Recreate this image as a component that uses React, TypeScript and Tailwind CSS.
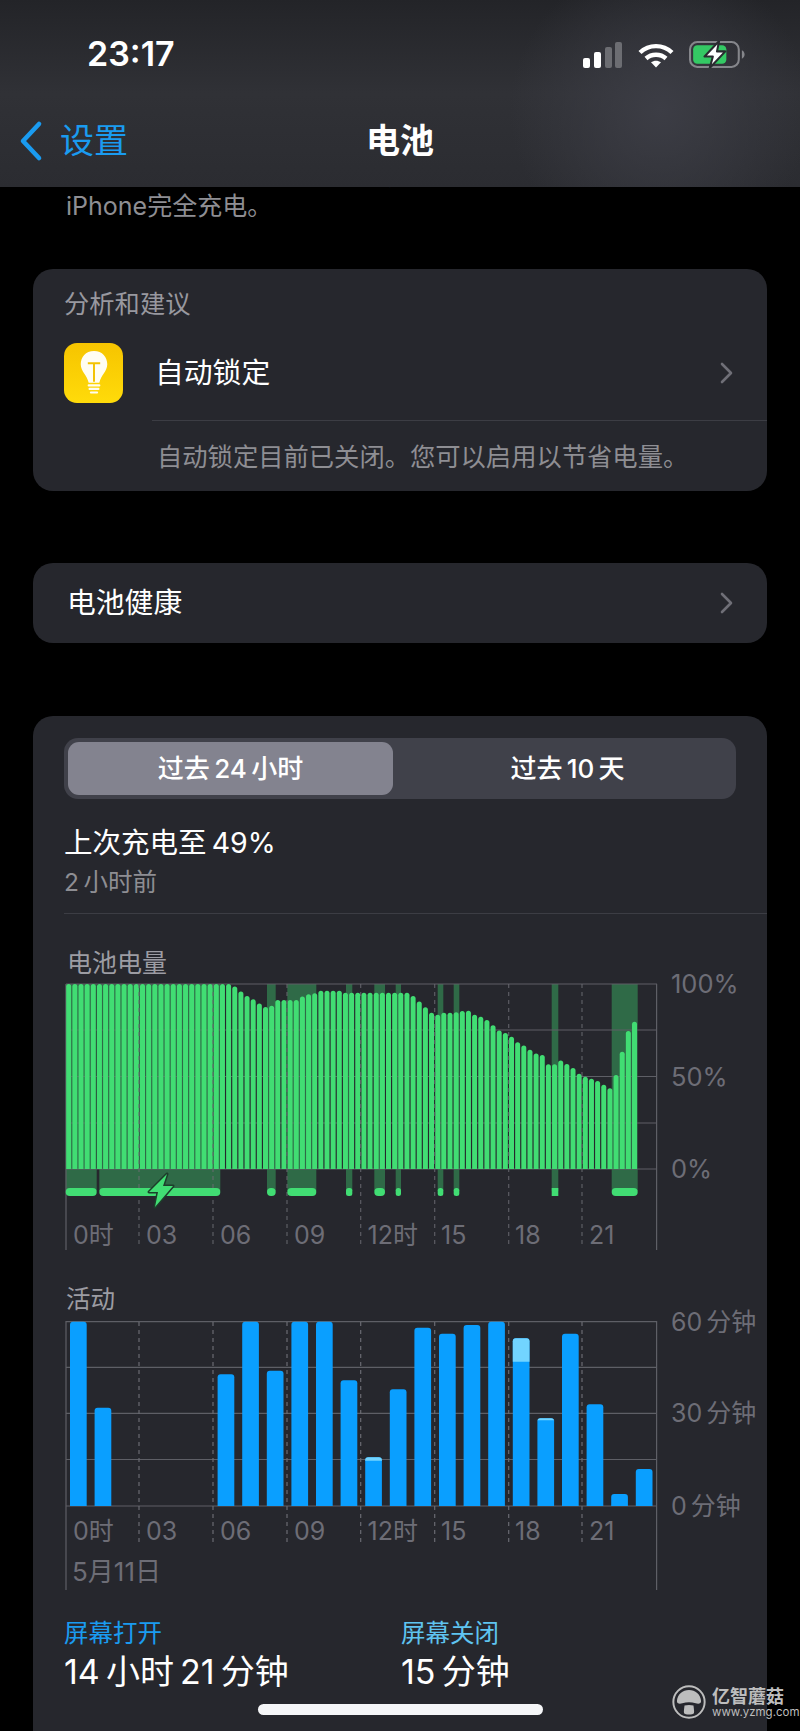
const fontStack = 'font-[Inter,"Noto_Sans_CJK_SC",sans-serif]'

// battery level for each 15 min slot, percent
const levels = [
  ...Array(27).fill(100),
  98.6, 95.9, 93.5, 91.7, 89.5, 87.6, 88.3, 91.4, 91.4, 91.4, 91.4, 93.2, 94.4, 95, 96.4, 96.4, 96.4, 96.4,
  ...Array(11).fill(95.3),
  93.5, 90.5, 87.4, 84.5, 83.4, 84.5, 84.5, 84.7, 85.4, 85.6, 83.4, 82.3, 80.5, 77.7, 74.8, 73.5, 71.5, 68.5,
  66.7, 64.5, 62.5, 61.6, 56.6, 56.6, 58.6, 56.8, 54.6, 51.5, 49.9, 48.8, 47.6, 45.6, 43.6, 50.8, 63.4, 74.6, 79.6,
]

const charging = [
  [65.7, 96.7], [99.3, 220.3], [267, 275.7], [287.3, 316.3], [346, 352.3], [374.3, 385],
  [395.7, 401], [437.7, 443.3], [453.7, 459.3], [551.7, 558.3], [611.7, 637.7],
]

// on / off screen minutes for each hour, as top y of the bar
const activity: { top: number; light?: number }[] = [
  { top: 1321.7 }, { top: 1407.7 }, { top: 0 }, { top: 0 }, { top: 0 }, { top: 0 },
  { top: 1374.3 }, { top: 1321.7 }, { top: 1370.7 }, { top: 1321.7 }, { top: 1321.7 }, { top: 1380.3 },
  { top: 1457.3, light: 3.5 }, { top: 1389.3 }, { top: 1327.7 }, { top: 1333.7 }, { top: 1325 }, { top: 1321.7 },
  { top: 1338.3, light: 23.5 }, { top: 1418.3, light: 2 }, { top: 1333.7 }, { top: 1404.3 }, { top: 1494 }, { top: 1469 },
]

const hours = [
  { x: 73, t: '0时' }, { x: 146, t: '03' }, { x: 220, t: '06' }, { x: 294, t: '09' },
  { x: 367.5, t: '12时' }, { x: 441, t: '15' }, { x: 515, t: '18' }, { x: 589, t: '21' },
]
const dashes = [139, 213, 287, 360.7, 434.7, 508.7, 582]

const topRound = (x: number, y: number, w: number, bottom: number, r: number) =>
  `M${x} ${bottom}V${y + r}Q${x} ${y} ${x + r} ${y}H${x + w - r}Q${x + w} ${y} ${x + w} ${y + r}V${bottom}Z`

function Chevron() {
  return (
    <svg width="16" height="24" viewBox="0 0 16 24" fill="none" className="shrink-0">
      <path d="M3 3l9 9-9 9" stroke="#6f6f77" strokeWidth="2.6" strokeLinecap="round" strokeLinejoin="round" />
    </svg>
  )
}

function StatusIcons() {
  return (
    <div className="flex items-end gap-[15px]">
      <svg width="40" height="26" viewBox="0 0 40 26">
        <rect x="0" y="16" width="7" height="10" rx="2" fill="#fff" />
        <rect x="11" y="10" width="7" height="16" rx="2" fill="#fff" />
        <rect x="22" y="5" width="7" height="21" rx="2" fill="#6c6d72" />
        <rect x="32" y="0" width="7" height="26" rx="2" fill="#6c6d72" />
      </svg>
      <svg width="36" height="25" viewBox="0 0 36 25" fill="none" stroke="#fff" strokeWidth="4.4">
        <path d="M2 9.5C11 1 25 1 34 9.5" />
        <path d="M8 15.5c5.5-5 14.500-5 20 0" />
        <path d="M18 24.500l-5-5.200c3-2.200 7-2.200 10 0z" fill="#fff" stroke="none" />
      </svg>
      <svg width="56" height="27" viewBox="0 0 54 26" fill="none">
        <rect x="1" y="1" width="47" height="24" rx="7" stroke="#85868b" strokeWidth="2" />
        <rect x="4" y="4" width="32" height="18" rx="4" fill="#34c964" />
        <path d="M51 9c2 1 2.600 2.500 2.600 4s-.6 3-2.600 4z" fill="#85868b" />
        <path d="M29 0L15 15h8l-3 11 15-16h-8z" fill="#fff" stroke="#2a2b30" strokeWidth="2" strokeLinejoin="round" />
      </svg>
    </div>
  )
}

function Header() {
  return (
    <div className="absolute top-0 left-0 w-[800px] h-[187px] bg-[radial-gradient(circle_at_660px_110px,#3c3d45_0%,rgba(60,61,69,0)_150px),linear-gradient(180deg,#232428_0%,#303136_50%,#2b2c31_100%)]">
      <div className="flex items-center justify-between pl-[87px] pr-[55px] pt-[33px] h-[75px]">
        <span className="text-[34px] leading-[36px] font-semibold text-white">23:17</span>
        <StatusIcons />
      </div>
      <div className="relative flex items-center h-[66px] mt-[33px] pl-[19px]">
        <svg width="24" height="42" viewBox="0 0 24 42" fill="none" className="shrink-0">
          <path d="M20 4L4 21l16 17" stroke="#1a9bf0" strokeWidth="4.600" strokeLinecap="round" strokeLinejoin="round" />
        </svg>
        <span className="ml-[17px] text-[34px] leading-[40px] text-[#1a9bf0]">设置</span>
        <span className="absolute left-[366px] top-[13px] text-[34px] leading-[40px] font-bold text-white">电池</span>
      </div>
    </div>
  )
}

function BatteryChart() {
  return (
    <svg width="734" height="282" viewBox="33 978 734 282" className="block overflow-visible">
      {charging.map(([a, b]) => (
        <rect key={a} x={a} y="984" width={b - a} height="207" fill="#2f6a47" />
      ))}
      {[984, 1030, 1076.500, 1123, 1169].map((y) => (
        <line key={y} x1="66" x2="657" y1={y} y2={y} stroke="#5e5f66" strokeWidth="1.200" />
      ))}
      <line x1="66" x2="66" y1="984" y2="1250" stroke="#5e5f66" strokeWidth="1.200" />
      <line x1="656.600" x2="656.600" y1="984" y2="1250" stroke="#5e5f66" strokeWidth="1.200" />
      {levels.map((l, i) => (
        <path key={i} d={topRound(66.200 + i * 6.15, 1169 - l * 1.85, 5, 1169, 2.5)} fill="#41dd73" />
      ))}
      {dashes.map((x) => (
        <line key={x} x1={x} x2={x} y1="984" y2="1245" stroke="#6a6b72" strokeOpacity="0.8" strokeWidth="1.200" strokeDasharray="4 4" />
      ))}
      {charging.map(([a, b]) => (
        <rect key={a} x={a} y="1188" width={b - a} height="8" rx={a === 551.7 ? 0 : b - a > 8 ? 4 : 2.500} fill="#41dd73" />
      ))}
      <path d="M167 1174l-18 18h9l-3 15 18-21h-10z" fill="#41dd73" stroke="#1d3d2b" strokeWidth="3" strokeLinejoin="round" paintOrder="stroke" />
      {hours.map((h) => (
        <text key={h.x} x={h.x} y="1244" fontSize="25" fill="#6d6d76">{h.t}</text>
      ))}
      <text x="671" y="993" fontSize="25.500" fill="#6d6d76">100%</text>
      <text x="671" y="1086" fontSize="25.500" fill="#6d6d76">50%</text>
      <text x="671" y="1178" fontSize="25.500" fill="#6d6d76">0%</text>
    </svg>
  )
}

function ActivityChart() {
  return (
    <svg width="734" height="290" viewBox="33 1314 734 290" className="block overflow-visible">
      {[1321.700, 1367.300, 1413.300, 1459.500, 1506].map((y) => (
        <line key={y} x1="66" x2="657" y1={y} y2={y} stroke="#5e5f66" strokeWidth="1.200" />
      ))}
      <line x1="66" x2="66" y1="1321" y2="1590" stroke="#5e5f66" strokeWidth="1.200" />
      <line x1="656.600" x2="656.600" y1="1321" y2="1590" stroke="#5e5f66" strokeWidth="1.200" />
      {dashes.map((x) => (
        <line key={x} x1={x} x2={x} y1="1322" y2="1543" stroke="#6a6b72" strokeWidth="1.200" strokeDasharray="4 4" />
      ))}
      {activity.map((b, i) =>
        b.top ? (
          <g key={i}>
            <path d={topRound(70 + i * 24.6, b.top, 16.7, 1506, 3)} fill="#0a9fff" />
            {b.light && <path d={topRound(70 + i * 24.6, b.top, 16.7, b.top + b.light, 3)} fill="#72d4ff" />}
          </g>
        ) : null,
      )}
      {hours.map((h) => (
        <text key={h.x} x={h.x} y="1540" fontSize="25" fill="#6d6d76">{h.t}</text>
      ))}
      <text x="72" y="1581" fontSize="26" fill="#6d6d76">5月11日</text>
      <text x="671" y="1331" fontSize="25" fill="#6d6d76" wordSpacing="-3">60 分钟</text>
      <text x="671" y="1422" fontSize="25" fill="#6d6d76" wordSpacing="-3">30 分钟</text>
      <text x="671" y="1515" fontSize="25" fill="#6d6d76" wordSpacing="-3">0 分钟</text>
    </svg>
  )
}

function Bulb() {
  return (
    <div className="w-[59px] h-[60px] rounded-[13px] shrink-0 bg-gradient-to-b from-[#f6c400] to-[#ffdb0a] flex items-center justify-center">
      <svg width="32" height="46" viewBox="0 0 36 52">
        <path d="M18 1C8.500 1 3 8 3 16c0 8 7 12 9 21h12c2-9 9-13 9-21C33 8 27.500 1 18 1z" fill="#fffdf2" />
        <path d="M11 15h14M18 15v21" stroke="#f3c200" strokeWidth="2.200" fill="none" />
        <path d="M12 40h12M13 44h10M14.500 48h7" stroke="#fffdf2" strokeWidth="2.400" strokeLinecap="round" />
      </svg>
    </div>
  )
}

function Watermark() {
  return (
    <div className="absolute left-[672px] top-[1685px] flex items-center gap-[6px] text-[#bdbdbd]">
      <svg width="34" height="34" viewBox="0 0 38 38" fill="none" className="shrink-0">
        <circle cx="19" cy="19" r="17.500" stroke="#bdbdbd" strokeWidth="2.200" />
        <path d="M5.500 18C6 10 12 5.500 19 5.500S32 10 32.500 18c.2 3-3 3.500-6 2.500-5-1.500-10-1.500-15 0-3 1-6.200.5-6-2.500z" fill="#bdbdbd" />
        <path d="M14 23c3-.8 7-.8 10 0 .5 4 1 7 .5 8.500-1 1.800-10 1.800-11 0-.5-1.500 0-4.500.5-8.500z" fill="#bdbdbd" />
      </svg>
      <div className="flex flex-col">
        <span className="text-[18px] leading-[19px] font-bold whitespace-nowrap">亿智蘑菇</span>
        <span className="text-[11.500px] leading-[12px] whitespace-nowrap">www.yzmg.com</span>
      </div>
    </div>
  )
}

export default function App() {
  return (
    <div className={`relative w-[800px] h-[1731px] overflow-hidden bg-black ${fontStack}`}>
      <div className="flex flex-col h-full">
        <div className="pt-[158px] pl-[66px] text-[25px] leading-[34px] text-[#8e8e93] mb-[46px] shrink-0">
          <p className="whitespace-nowrap mb-[-3px]">将在充电至 80% 后暂停充电，并在您需要使用时让</p>
          <p>iPhone完全充电。</p>
        </div>

        <section className="mx-[33px] h-[222px] rounded-[20px] bg-[#26272d] shrink-0">
          <div className="pt-[20px] pl-[31px] h-[50px] text-[25.300px] leading-[30px] text-[#98989f]">分析和建议</div>
          <div className="mt-[24px] flex items-center pl-[31px] pr-[32px]">
            <Bulb />
            <span className="ml-[32px] flex-1 text-[28.800px] leading-[36px] text-white">自动锁定</span>
            <Chevron />
          </div>
          <div className="mt-[17px] ml-[119px] h-px bg-[#3c3d44]" />
          <div className="mt-[21px] ml-[124px] text-[25.300px] leading-[30px] text-[#8e8e93] whitespace-nowrap">自动锁定目前已关闭。您可以启用以节省电量。</div>
        </section>

        <section className="mx-[33px] mt-[72px] h-[80px] rounded-[20px] bg-[#26272d] flex items-center pl-[34px] pr-[32px] shrink-0">
          <span className="flex-1 text-[28.800px] leading-[36px] text-white">电池健康</span>
          <Chevron />
        </section>

        <section className="mx-[33px] mt-[73px] flex-1 rounded-t-[20px] bg-[#26272d]">
          <div className="mt-[22px] ml-[31px] w-[672px] h-[61px] rounded-[14px] bg-[#40414a] flex items-stretch p-[4px] text-[26px] font-medium text-white [word-spacing:-0.1em]">
            <div className="w-[325px] rounded-[11px] bg-[#83838f] flex items-center justify-center">过去 24 小时</div>
            <div className="flex-1 flex items-center justify-center pl-[10px]">过去 10 天</div>
          </div>
          <div className="mt-[26px] pl-[31px] text-[28.500px] leading-[36px] text-white [word-spacing:-0.1em]">上次充电至 49%</div>
          <div className="mt-[6px] pl-[31px] text-[24.500px] leading-[30px] text-[#8e8e93] [word-spacing:-0.1em]">2 小时前</div>
          <div className="mt-[16px] ml-[31px] h-px bg-[#3c3d44]" />
          <div className="mt-[34px] pl-[34px] text-[25px] leading-[30px] text-[#9c9ca3]">电池电量</div>
          <BatteryChart />
          <div className="mt-[24px] pl-[33px] text-[24.500px] leading-[30px] text-[#9c9ca3]">活动</div>
          <ActivityChart />
          <div className="mt-[13px] pl-[31px] flex">
            <div className="w-[337px]">
              <div className="text-[24.500px] leading-[32px] text-[#1a9bf0]">屏幕打开</div>
              <div className="mt-[1px] text-[34px] leading-[44px] text-white [word-spacing:-0.1em]">14 小时 21 分钟</div>
            </div>
            <div>
              <div className="text-[24.500px] leading-[32px] text-[#5fc4f0]">屏幕关闭</div>
              <div className="mt-[1px] text-[34px] leading-[44px] text-white [word-spacing:-0.1em]">15 分钟</div>
            </div>
          </div>
        </section>
      </div>

      <Header />
      <div className="absolute left-[258px] top-[1704px] w-[285px] h-[11px] rounded-full bg-[#f5f6f8]" />
      <Watermark />
    </div>
  )
}
